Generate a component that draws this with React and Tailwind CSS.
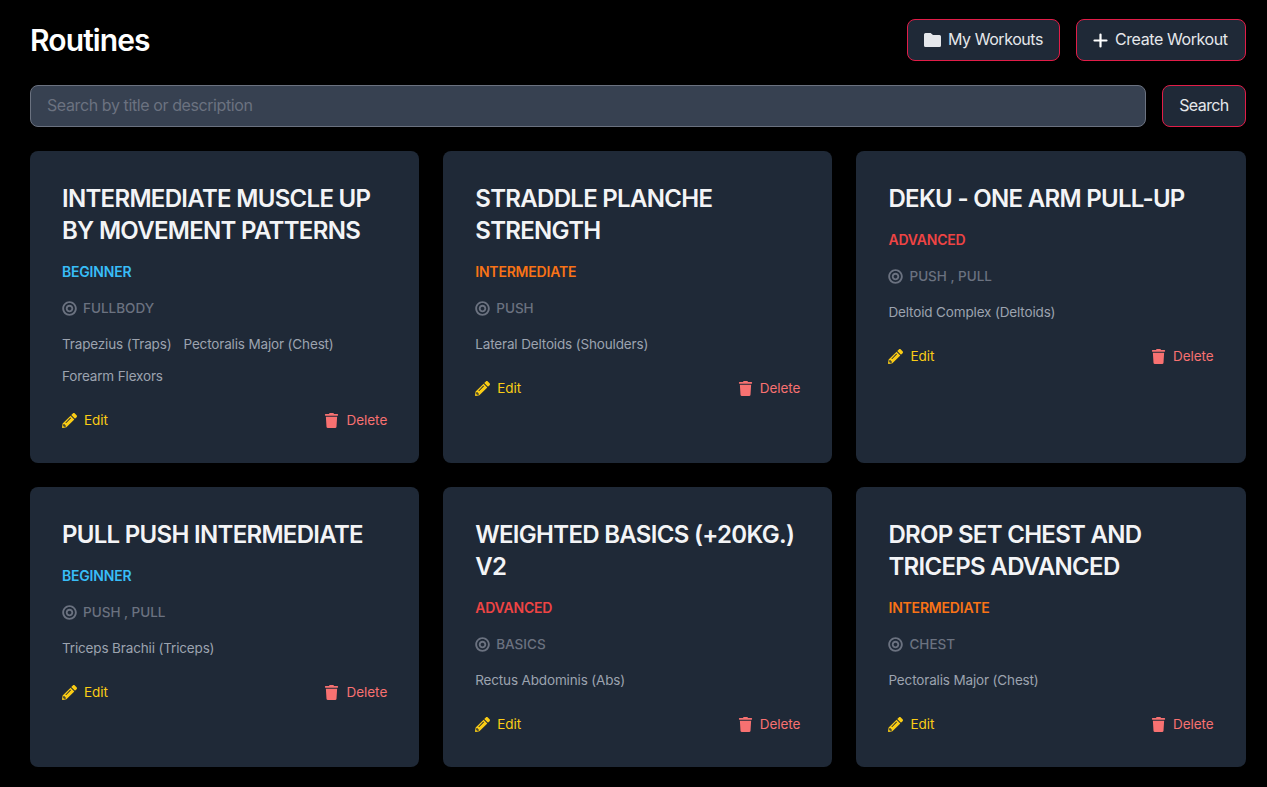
import { FaPencilAlt, FaTrash, FaBullseye } from 'react-icons/fa';

const routines = [
  { title: ['INTERMEDIATE MUSCLE UP', 'BY MOVEMENT PATTERNS'], level: 'BEGINNER', type: 'FULLBODY', muscles: ['Trapezius (Traps)', 'Pectoralis Major (Chest)', 'Forearm Flexors'] },
  { title: ['STRADDLE PLANCHE', 'STRENGTH'], level: 'INTERMEDIATE', type: 'PUSH', muscles: ['Lateral Deltoids (Shoulders)'] },
  { title: ['DEKU - ONE ARM PULL-UP'], level: 'ADVANCED', type: 'PUSH , PULL', muscles: ['Deltoid Complex (Deltoids)'] },
  { title: ['PULL PUSH INTERMEDIATE'], level: 'BEGINNER', type: 'PUSH , PULL', muscles: ['Triceps Brachii (Triceps)'] },
  { title: ['WEIGHTED BASICS (+20KG.)', 'V2'], level: 'ADVANCED', type: 'BASICS', muscles: ['Rectus Abdominis (Abs)'] },
  { title: ['DROP SET CHEST AND', 'TRICEPS ADVANCED'], level: 'INTERMEDIATE', type: 'CHEST', muscles: ['Pectoralis Major (Chest)'] },
];

const levelColors = {
  BEGINNER: 'text-[#38bdf8]',
  INTERMEDIATE: 'text-[#f97316]',
  ADVANCED: 'text-[#ef4444]',
};

function RoutineCard({ routine }) {
  return (
    <div className="flex flex-col items-start rounded-lg bg-[#1f2937] px-8 pt-8 pb-[34px]">
      <h2 className="mb-4 text-2xl font-semibold tracking-[-0.7px] text-[#f3f4f6]">
        {routine.title.map((line) => (
          <div key={line}>{line}</div>
        ))}
      </h2>
      <div className={`mb-[18px] text-sm leading-[18px] font-semibold tracking-[-0.2px] ${levelColors[routine.level]}`}>
        {routine.level}
      </div>
      <div className="mb-[18px] flex h-[18px] items-center gap-[6px] text-[#6b7280]">
        <FaBullseye className="h-[15px] w-[15px]" />
        <span className="text-[13.5px] leading-[18px] font-medium">{routine.type}</span>
      </div>
      <div className="mb-[26px] flex flex-wrap gap-x-3 gap-y-[14px] text-[13.5px] leading-[18px] tracking-[-0.15px] text-[#9ca3af]">
        {routine.muscles.map((m) => (
          <span key={m}>{m}</span>
        ))}
      </div>
      <div className="flex h-[18px] w-full items-center justify-between text-[13.5px] leading-[18px] tracking-[-0.02px]">
        <button className="flex items-center gap-[7px] text-[#facc15]">
          <FaPencilAlt className="h-[15px] w-[15px]" />
          Edit
        </button>
        <button className="flex items-center gap-[7px] text-[#f87171]">
          <FaTrash className="h-[15px] w-[15px]" />
          Delete
        </button>
      </div>
    </div>
  );
}

export default function App() {
  return (
    <div className="min-h-[787px] bg-black pt-[19px] pr-[21.3px] pl-[30px] font-['Inter',sans-serif]">
      <div className="mb-6 flex items-center justify-between">
        <h1 className="text-3xl font-semibold tracking-[-0.9px] text-white">Routines</h1>
        <div className="flex gap-4">
          <button className="flex h-[42px] items-center gap-[7px] rounded-lg border border-[#e11d48] bg-[#1f2937] px-4 text-base tracking-[-0.45px] text-[#e5e7eb]">
            <svg className="h-[14px] w-[17px]" viewBox="0 0 17 14" fill="currentColor">
              <path d="M1.5 0h4.6c.4 0 .8.2 1.1.4L9 2h6.5A1.5 1.5 0 0 1 17 3.500v9a1.500 1.500 0 0 1-1.500 1.500h-14A1.500 1.500 0 0 1 0 12.500v-11A1.500 1.500 0 0 1 1.500 0z" />
            </svg>
            <span className="mb-0.5">My Workouts</span>
          </button>
          <button className="flex h-[42px] items-center gap-[7px] rounded-lg border border-[#e11d48] bg-[#1f2937] pr-[17px] pl-4 text-base tracking-[-0.4px] text-[#e5e7eb]">
            <svg className="h-[15px] w-[15px]" viewBox="0 0 15 15" fill="none" stroke="#ffffff" strokeWidth="2.2" strokeLinecap="round">
              <path d="M7.5 1.500v12M1.500 7.500h12" />
            </svg>
            <span className="mb-0.5">Create Workout</span>
          </button>
        </div>
      </div>
      <div className="mb-6 flex gap-4">
        <input
          placeholder="Search by title or description"
          className="h-[42px] min-w-0 flex-1 rounded-lg border border-[#6b7280] bg-[#374151] px-4 pb-0.5 text-base tracking-[-0.4px] placeholder:text-[#6b7280]"
        />
        <button className="h-[42px] rounded-lg border border-[#e11d48] bg-[#1f2937] px-4 pb-0.5 text-base tracking-[-0.6px] text-[#e5e7eb]">
          Search
        </button>
      </div>
      <div className="grid grid-cols-3 gap-6">
        {routines.map((r) => (
          <RoutineCard key={r.title[0]} routine={r} />
        ))}
      </div>
    </div>
  );
}
